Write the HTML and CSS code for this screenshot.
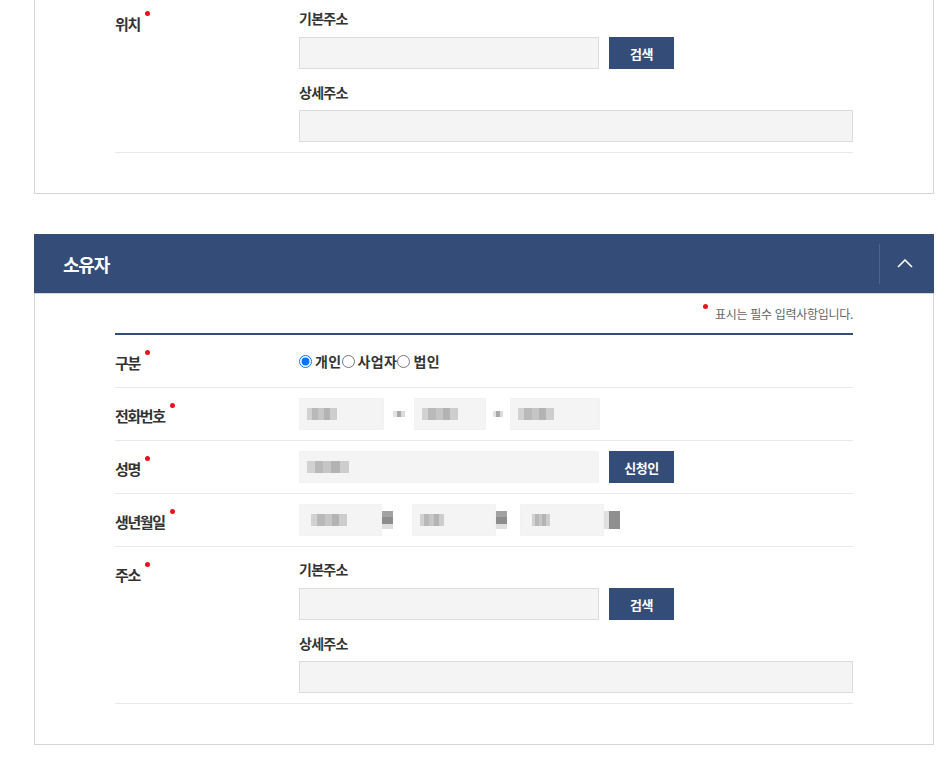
FILE: index.html
```html
<!DOCTYPE html>
<html lang="ko">
<head>
    <meta charset="UTF-8">
    <meta name="viewport" content="width=device-width, initial-scale=1.0">
    <title>소유자 정보 입력</title>
    <link rel="stylesheet" href="styles.css">
</head>
<body>
    <div class="wrap">
        <!-- 위치 (scrolled, top of panel is above the fold) -->
        <section class="panel">
            <div class="panel-body cut">
                <div class="row">
                    <div class="row-label"><span class="req">위치</span></div>
                    <div class="row-field">
                        <p class="sub-label">기본주소</p>
                        <div class="inline">
                            <input type="text" class="inp inp-addr">
                            <button type="button" class="btn">검색</button>
                        </div>
                        <p class="sub-label next">상세주소</p>
                        <input type="text" class="inp inp-full">
                    </div>
                </div>
            </div>
        </section>

        <section class="panel">
            <div class="panel-head">
                <h2>소유자</h2>
                <button type="button" class="toggle" aria-label="접기">
                    <svg width="16" height="9" viewBox="0 0 16 9"><polyline points="1,8 8,1 15,8" fill="none" stroke="#fff" stroke-width="1.6"/></svg>
                </button>
            </div>
            <div class="panel-body">
                <p class="note"><span class="dot"></span>표시는 필수 입력사항입니다.</p>
                <div class="rows">
                    <div class="row">
                        <div class="row-label"><span class="req">구분</span></div>
                        <div class="row-field">
                            <div class="radios">
                                <label><input type="radio" name="ownerType" checked>개인</label>
                                <label><input type="radio" name="ownerType">사업자</label>
                                <label><input type="radio" name="ownerType">법인</label>
                            </div>
                        </div>
                    </div>
                    <div class="row">
                        <div class="row-label"><span class="req">전화번호</span></div>
                        <div class="row-field">
                            <div class="inline tight">
                                <div class="inp blur w85"><span class="mosaic m30"></span></div>
                                <span class="sep w30"><span class="mosaic m12 light"></span></span>
                                <div class="inp blur w72"><span class="mosaic m36"></span></div>
                                <span class="sep w24"><span class="mosaic m10 light"></span></span>
                                <div class="inp blur w90"><span class="mosaic m36"></span></div>
                            </div>
                        </div>
                    </div>
                    <div class="row">
                        <div class="row-label"><span class="req">성명</span></div>
                        <div class="row-field">
                            <div class="inline">
                                <div class="inp blur inp-addr"><span class="mosaic m42"></span></div>
                                <button type="button" class="btn">신청인</button>
                            </div>
                        </div>
                    </div>
                    <div class="row">
                        <div class="row-label"><span class="req">생년월일</span></div>
                        <div class="row-field">
                            <div class="inline tight">
                                <div class="inp blur w83 pad11"><span class="mosaic m36"></span></div>
                                <span class="suffix w30"><span class="mosaic ch"></span></span>
                                <div class="inp blur w84"><span class="mosaic m24"></span></div>
                                <span class="suffix w24"><span class="mosaic ch"></span></span>
                                <div class="inp blur w84 pad11"><span class="mosaic m18"></span></div>
                                <span class="suffix"><span class="mosaic ch wide"></span></span>
                            </div>
                        </div>
                    </div>
                    <div class="row">
                        <div class="row-label"><span class="req">주소</span></div>
                        <div class="row-field">
                            <p class="sub-label">기본주소</p>
                            <div class="inline">
                                <input type="text" class="inp inp-addr">
                                <button type="button" class="btn">검색</button>
                            </div>
                            <p class="sub-label next">상세주소</p>
                            <input type="text" class="inp inp-full">
                        </div>
                    </div>
                </div>
            </div>
        </section>
    </div>
</body>
</html>
```

FILE: styles.css
```css
body {
    margin: 0;
    background: #fff;
    color: #333;
    font-family: "Noto Sans CJK KR", "Noto Sans", sans-serif;
}

.wrap {
    width: 900px;
    margin: -4px 0 0 34px;
}

.panel + .panel {
    margin-top: 40px;
}

.panel-head {
    height: 59px;
    background: #344c78;
    display: flex;
    align-items: center;
    padding-left: 29px;
}

.panel-head h2 {
    flex: 1;
    margin: 0;
    color: #fff;
    font-size: 18px;
    font-weight: 700;
    letter-spacing: -1.2px;
}

.toggle {
    width: 55px;
    height: 40px;
    padding: 0 4px 0 0;
    border: 0;
    border-left: 1px solid rgba(255, 255, 255, 0.13);
    background: none;
    display: flex;
    align-items: center;
    justify-content: center;
    cursor: pointer;
}

.panel-body {
    border: 1px solid #d6d6d6;
    padding: 0 80px 40px;
}

.panel-body.cut {
    border-top: 0;
}

.note {
    margin: 0;
    padding: 10px 0 9px;
    text-align: right;
    font-size: 12px;
    line-height: 20px;
    color: #666;
    letter-spacing: -0.3px;
}

.note .dot {
    display: inline-block;
    vertical-align: top;
    width: 5px;
    height: 5px;
    margin-right: 7px;
    border-radius: 50%;
    background: #e8141c;
}

.rows {
    border-top: 2px solid #344c78;
}

.row {
    display: flex;
    padding: 10px 0;
    border-bottom: 1px solid #e9e9e9;
}

.row-label {
    width: 184px;
    flex-shrink: 0;
    padding-top: 6px;
    font-size: 15px;
    font-weight: 700;
    line-height: 24px;
    letter-spacing: -1.4px;
}

.req {
    position: relative;
}

.req::after {
    content: "";
    position: absolute;
    top: -2px;
    left: 100%;
    margin-left: 5px;
    width: 5px;
    height: 5px;
    border-radius: 50%;
    background: #e8141c;
}

.row-field {
    flex: 1;
}

.sub-label {
    margin: 0 0 7px;
    font-size: 14px;
    font-weight: 700;
    line-height: 24px;
    letter-spacing: -0.7px;
}

.sub-label.next {
    margin: 11px 0 6px;
}

.inline {
    display: flex;
    align-items: center;
    gap: 10px;
}

.inline.tight {
    gap: 0;
}

.inp {
    display: block;
    box-sizing: border-box;
    height: 32px;
    margin: 0;
    padding: 0 7px;
    border: 1px solid #dcdcdc;
    background: #f4f4f4;
    font: inherit;
    font-size: 14px;
}

.inp-addr {
    width: 300px;
}

.inp-full {
    width: 100%;
}

.inp.blur {
    display: flex;
    align-items: center;
    border-color: #f2f2f2;
}

.pad11 {
    padding-left: 11px;
}

.w72 { width: 72px; }
.w83 { width: 83px; }
.w84 { width: 84px; }
.w85 { width: 85px; }
.w90 { width: 90px; }

.sep,
.suffix {
    display: flex;
    align-items: center;
    height: 32px;
}

.sep {
    justify-content: center;
}

.sep.w30,
.suffix.w30 { width: 30px; }
.sep.w24,
.suffix.w24 { width: 24px; }

.mosaic {
    display: inline-block;
    height: 12px;
    background: linear-gradient(90deg, #d2d2d2 0 18%, #b9b9b9 18% 38%, #c6c6c6 38% 58%, #b3b3b3 58% 78%, #cdcdcd 78%);
}

.m10 { width: 10px; height: 6px; }
.m12 { width: 12px; height: 6px; }
.m18 { width: 18px; }
.m24 { width: 24px; }
.m30 { width: 30px; }
.m36 { width: 36px; }
.m42 { width: 42px; }

.mosaic.light {
    background: linear-gradient(90deg, #e2e2e2 0 35%, #a9a9a9 35% 70%, #dcdcdc 70%);
}

.mosaic.ch {
    width: 11px;
    height: 18px;
    background: linear-gradient(180deg, #a2a2a2 0 35%, #8d8d8d 35% 70%, #dedede 70%);
}

.mosaic.ch.wide {
    width: 16px;
    background: linear-gradient(90deg, #e0e0e0 0 30%, #8f8f8f 30%);
}

.btn {
    width: 65px;
    height: 32px;
    padding: 0;
    border: 0;
    background: #344c78;
    color: #fff;
    font-family: inherit;
    font-size: 13px;
    font-weight: 700;
    letter-spacing: -0.5px;
    cursor: pointer;
}

.radios {
    display: flex;
    align-items: center;
    height: 32px;
    font-size: 14px;
    font-weight: 700;
    letter-spacing: 0.4px;
}

.radios label {
    display: flex;
    align-items: center;
    cursor: pointer;
}

.radios input {
    width: 13px;
    height: 13px;
    margin: 0 3px 0 0;
}
```
